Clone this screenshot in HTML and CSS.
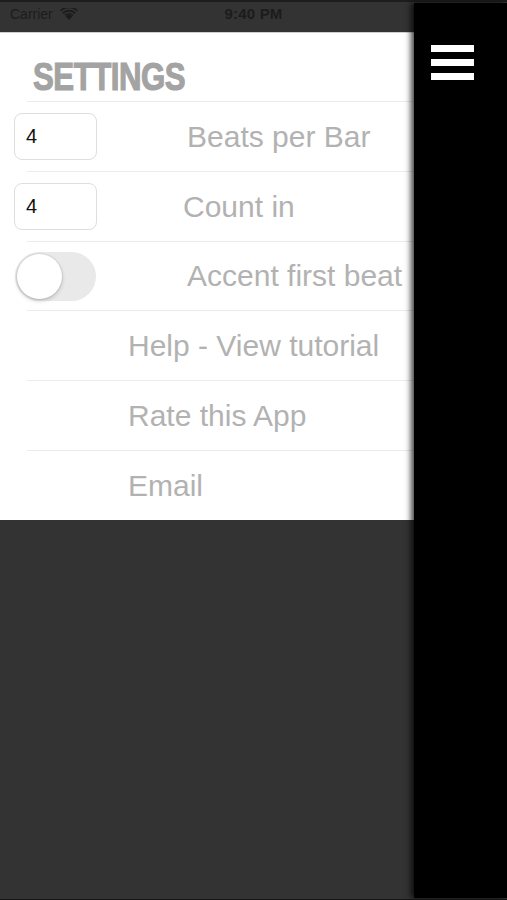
FILE: index.html
```html
<!DOCTYPE html>
<html>
<head>
<meta charset="utf-8">
<link rel="stylesheet" href="styles.css">
</head>
<body>
<div class="screen">
  <div class="statusbar">
    <div class="carrier">
      <span>Carrier</span>
      <svg class="wifi" width="18" height="12" viewBox="0 0 18 12">
        <path d="M9 12 L5.6 8.2 A5 5 0 0 1 12.4 8.2 Z" fill="#1c1c1c"/>
        <path d="M4.4 6.9 A6.8 6.8 0 0 1 13.6 6.9 L12.6 8 A5.3 5.3 0 0 0 5.4 8 Z" fill="#1c1c1c"/>
        <path d="M2.2 4.5 A9.6 9.6 0 0 1 15.8 4.5 L14.4 5.9 A7.7 7.7 0 0 0 3.6 5.9 Z" fill="#1c1c1c"/>
        <path d="M0 2.2 A12.6 12.6 0 0 1 18 2.2 L16.7 3.5 A10.8 10.8 0 0 0 1.3 3.5 Z" fill="#1c1c1c"/>
      </svg>
    </div>
    <div class="time">9:40 PM</div>
  </div>

  <div class="settings">
    <div class="header"><h1 class="title">SETTINGS</h1></div>
    <div class="row">
      <div class="field">4</div>
      <span class="label label-beats">Beats per Bar</span>
    </div>
    <div class="row">
      <div class="field">4</div>
      <span class="label label-count">Count in</span>
    </div>
    <div class="row">
      <div class="toggle"><div class="knob"></div></div>
      <span class="label label-accent">Accent first beat</span>
    </div>
    <div class="row">
      <span class="label label-link">Help - View tutorial</span>
    </div>
    <div class="row">
      <span class="label label-link">Rate this App</span>
    </div>
    <div class="row">
      <span class="label label-link">Email</span>
    </div>
  </div>

  <div class="menu-panel">
    <div class="hamburger">
      <span class="bar"></span>
      <span class="bar"></span>
      <span class="bar"></span>
    </div>
  </div>
</div>
</body>
</html>
```

FILE: styles.css
```css
* { box-sizing: border-box; }
html, body { margin: 0; padding: 0; }
body {
  width: 507px;
  height: 900px;
  overflow: hidden;
  font-family: "Liberation Sans", Arial, sans-serif;
  background: #333333;
}
.screen {
  position: relative;
  width: 507px;
  height: 900px;
  background: #333333;
  border-bottom: 1px solid #151515;
  overflow: hidden;
}
.statusbar {
  height: 33px;
  border-top: 2px solid #1d1d1d;
  border-bottom: 1px solid #cfcfcf;
  background: #333333;
  position: relative;
  display: flex;
  align-items: center;
  padding-left: 10px;
  color: #1c1c1c;
}
.carrier {
  display: flex;
  align-items: center;
  gap: 7px;
  font-size: 14px;
  margin-top: -6px;
}
.wifi { display: block; margin-top: -1px; }
.time {
  position: absolute;
  left: 0;
  right: 0;
  top: 3px;
  text-align: center;
  font-size: 15px;
  font-weight: bold;
  letter-spacing: 0.2px;
}
.settings {
  background: #ffffff;
  height: 487px;
}
.header {
  height: 68px;
  padding-left: 33px;
  display: flex;
  align-items: center;
}
.title {
  margin: 0;
  margin-top: 20px;
  font-family: "Liberation Sans", Arial, sans-serif;
  font-weight: bold;
  font-size: 39px;
  color: #a3a3a3;
  -webkit-text-stroke: 1.2px #a3a3a3;
  letter-spacing: -0.6px;
  transform: scaleX(0.8);
  transform-origin: left center;
}
.row {
  position: relative;
  height: 69.8px;
  display: flex;
  align-items: center;
  padding-top: 2px;
}
.row::before {
  content: "";
  position: absolute;
  left: 27px;
  right: 0;
  top: 0;
  height: 1px;
  background: #ececec;
}
.field {
  margin-left: 14px;
  width: 83px;
  height: 47px;
  border: 1px solid #dedede;
  border-radius: 8px;
  padding-left: 11px;
  display: flex;
  align-items: center;
  font-size: 20px;
  color: #111;
}
.toggle {
  margin-left: 15px;
  width: 81px;
  height: 49px;
  border-radius: 25px;
  background: #e9e9ea;
  position: relative;
}
.knob {
  position: absolute;
  left: 2px;
  top: 2px;
  width: 45px;
  height: 45px;
  border-radius: 50%;
  background: #fff;
  box-shadow: 0 2px 4px rgba(0,0,0,0.18), 0 0 0 1px rgba(0,0,0,0.06);
}
.label {
  font-size: 30px;
  color: #b2b2b2;
  white-space: nowrap;
}
.label-beats { margin-left: 90px; }
.label-count { margin-left: 86px; }
.label-accent { margin-left: 91px; }
.label-link { margin-left: 128px; }
.menu-panel {
  position: absolute;
  top: 3px;
  bottom: 1px;
  left: 414px;
  right: 0;
  background: #000;
  box-shadow: -3px 0 6px rgba(0,0,0,0.75);
  padding: 42px 0 0 17px;
}
.hamburger {
  display: flex;
  flex-direction: column;
  gap: 7px;
}
.bar {
  display: block;
  width: 43px;
  height: 7px;
  background: #fff;
}
```
